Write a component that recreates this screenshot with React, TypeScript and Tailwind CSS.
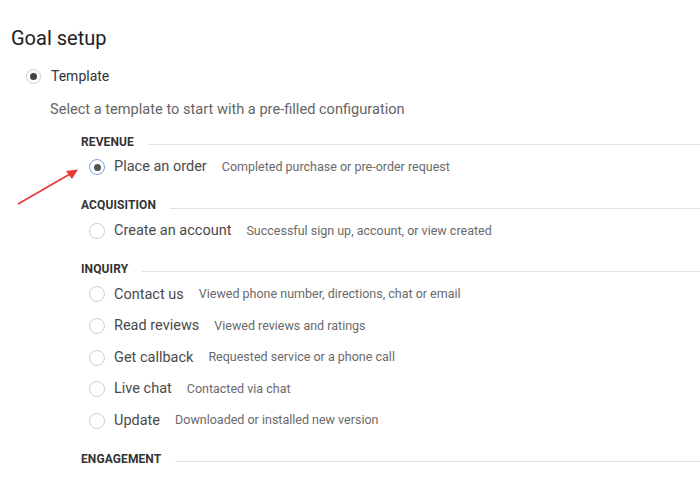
import React from "react";

type Item = { label: string; desc: string; selected?: boolean };
type Section = { title: string; items: Item[] };

const sections: Section[] = [
  {
    title: "REVENUE",
    items: [{ label: "Place an order", desc: "Completed purchase or pre-order request", selected: true }],
  },
  {
    title: "ACQUISITION",
    items: [{ label: "Create an account", desc: "Successful sign up, account, or view created" }],
  },
  {
    title: "INQUIRY",
    items: [
      { label: "Contact us", desc: "Viewed phone number, directions, chat or email" },
      { label: "Read reviews", desc: "Viewed reviews and ratings" },
      { label: "Get callback", desc: "Requested service or a phone call" },
      { label: "Live chat", desc: "Contacted via chat" },
      { label: "Update", desc: "Downloaded or installed new version" },
    ],
  },
  { title: "ENGAGEMENT", items: [] },
];

function Radio({ selected }: { selected?: boolean }) {
  return (
    <span
      className={
        "flex h-[16px] w-[16px] shrink-0 items-center justify-center rounded-full border-[1.5px] " +
        (selected ? "border-[#7d9de3]" : "border-[#cfcfcf]")
      }
    >
      {selected && <span className="h-[7px] w-[7px] rounded-full bg-[#555555]" />}
    </span>
  );
}

export default function App() {
  return (
    <div
      className="relative h-[500px] w-[700px] overflow-hidden bg-white"
      style={{ fontFamily: "Roboto, 'Noto Sans', sans-serif" }}
    >
      <div className="pl-[11px] pt-[25px]">
        <div className="h-[26px] text-[20px] leading-[26px] text-[#212121]">Goal setup</div>
        <div className="mt-[15px] flex h-[20px] items-center pl-[15px]">
          <span className="flex h-[15px] w-[15px] items-center justify-center rounded-full border-[1.5px] border-[#d0d0d0]">
            <span className="h-[7px] w-[7px] rounded-full bg-[#444444]" />
          </span>
          <span className="ml-[10px] text-[14px] text-[#333333]">Template</span>
        </div>
        <div className="mt-[13px] h-[20px] pl-[39px] text-[14.6px] leading-[20px] text-[#666666]">
          Select a template to start with a pre-filled configuration
        </div>
        <div className="mt-[12.5px] pl-[70px]">
          {sections.map((s, i) => (
            <div key={s.title} className={i > 0 ? "mt-[12px]" : ""}>
              <div className="flex h-[20px] items-center">
                <span className="text-[12px] font-bold tracking-[0.1px] text-[#333333]">{s.title}</span>
                <span className="ml-[14px] mt-[6px] h-px flex-1 bg-[#e2e2e2]" />
              </div>
              {s.items.map((it) => (
                <div key={it.label} className="flex h-[31.6px] items-center pl-[8px]">
                  <Radio selected={it.selected} />
                  <span className="ml-[9px] text-[14.5px] text-[#4a4a4a]">{it.label}</span>
                  <span className="ml-[15px] text-[12.5px] text-[#6a6a6a]">{it.desc}</span>
                </div>
              ))}
            </div>
          ))}
        </div>
      </div>
      <svg className="absolute left-0 top-0" width="700" height="500" viewBox="0 0 700 500">
        <line x1="18" y1="204" x2="70" y2="174" stroke="#e53935" strokeWidth="1.6" />
        <polygon points="78,169.5 66,171 72,179" fill="#e53935" />
      </svg>
    </div>
  );
}
